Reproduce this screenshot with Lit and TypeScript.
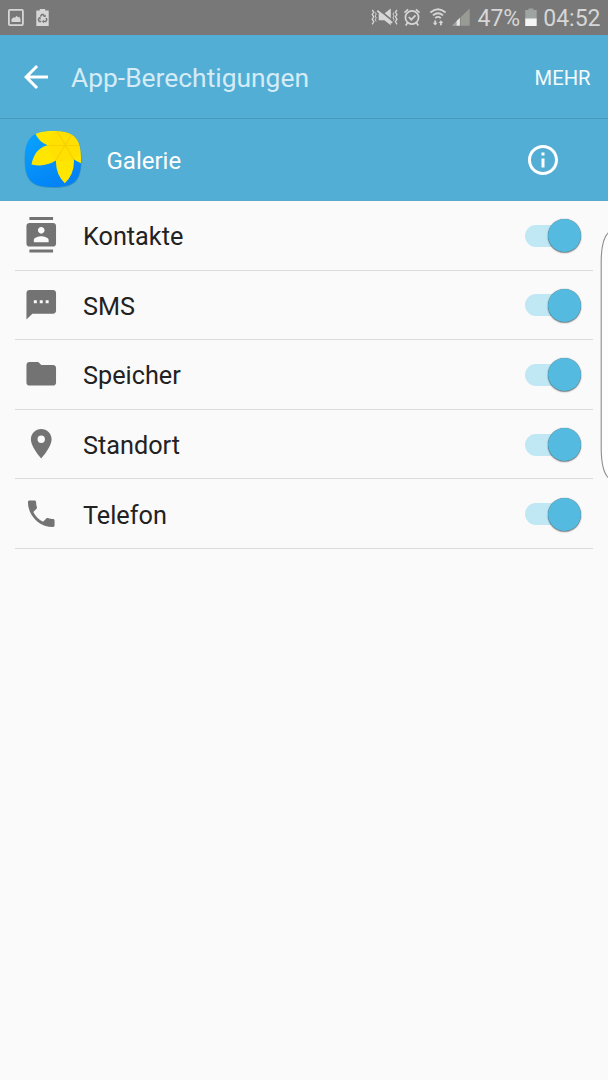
import { LitElement, html, css, svg } from "lit";
import { customElement } from "lit/decorators.js";

const ICONS = {
  contacts: svg`<path d="M20 0H4v2h16V0zM4 24h16v-2H4v2zM20 4H4c-1.1 0-2 .9-2 2v12c0 1.1.9 2 2 2h16c1.1 0 2-.9 2-2V6c0-1.1-.9-2-2-2zm-8 2.750c1.240 0 2.250 1.010 2.250 2.250s-1.010 2.250-2.250 2.250S9.750 10.240 9.750 9 10.760 6.750 12 6.750zM17 17H7v-1.500c0-1.670 3.330-2.500 5-2.500s5 .830 5 2.500V17z"/>`,
  sms: svg`<path d="M20 2H4c-1.100 0-1.990.9-1.990 2L2 22l4-4h14c1.100 0 2-.9 2-2V4c0-1.100-.9-2-2-2zM9 11H7V9h2v2zm4 0h-2V9h2v2zm4 0h-2V9h2v2z"/>`,
  folder: svg`<path d="M10 4H4c-1.100 0-1.990.9-1.990 2L2 18c0 1.100.9 2 2 2h16c1.100 0 2-.9 2-2V8c0-1.100-.9-2-2-2h-8l-2-2z"/>`,
  place: svg`<path d="M12 2C8.130 2 5 5.130 5 9c0 5.250 7 13 7 13s7-7.750 7-13c0-3.870-3.130-7-7-7zm0 9.500a2.500 2.500 0 0 1 0-5 2.500 2.500 0 0 1 0 5z"/>`,
  phone: svg`<path d="M6.620 10.790c1.440 2.830 3.760 5.140 6.590 6.590l2.200-2.200c.27-.27.67-.36 1.020-.24 1.120.37 2.330.57 3.570.57.55 0 1 .45 1 1V20c0 .55-.45 1-1 1-9.390 0-17-7.610-17-17 0-.55.45-1 1-1h3.500c.55 0 1 .45 1 1 0 1.250.2 2.450.57 3.570.11.35.03.74-.25 1.020l-2.200 2.200z"/>`,
};

const PERMISSIONS = [
  { icon: ICONS.contacts, label: "Kontakte" },
  { icon: ICONS.sms, label: "SMS" },
  { icon: ICONS.folder, label: "Speicher" },
  { icon: ICONS.place, label: "Standort" },
  { icon: ICONS.phone, label: "Telefon" },
];

@customElement("status-bar")
class StatusBar extends LitElement {
  static styles = css`
    :host {
      display: flex;
      align-items: center;
      height: 35px;
      box-sizing: border-box;
      padding: 0 7.500px 0 7px;
      background: #787878;
      color: #d6d6d6;
      font-size: 23px;
    }
    svg { display: block; flex: none; }
    .gap { flex: 1; }
    .battery-left { margin-left: 11px; }
    .percent { margin-left: 5.500px; }
    .text { line-height: 35px; padding-top: 1px; white-space: nowrap; }
  `;
  render() {
    return html`
      <svg width="18" height="35" viewBox="7 0 18 35">
        <rect x="8.900" y="9.900" width="14" height="15.200" rx="1" fill="none" stroke="#d6d6d6" stroke-width="1.800"/>
        <path d="M11.500 22v-2.800l2-2 1.500.5 1.500-2 1.500 1.500 1.300-.5 1.200 2.500V22z" fill="#d6d6d6"/>
      </svg>
      <svg class="battery-left" width="13" height="35" viewBox="36 0 13 35">
        <path d="M36.300 10.500h3.500V9h5.400v1.500h3.500V26H36.300z" fill="#d6d6d6"/>
        <g fill="none" stroke="#787878" stroke-width="1.500">
          <path d="M40.400 16.700l1.400-2.200h1.500l1.400 2.200M46 18l.8 1.600-1 1.800h-2.500M41.300 21.400h-2l-.9-1.800 1.200-2"/>
        </g>
        <path d="M43.300 17h2.400v-2.400zM43.800 19.500v3.700l-1.900-1.800zM38.200 17.300h2.500v2.400z" fill="#787878"/>
      </svg>
      <div class="gap"></div>
      <svg width="102" height="35" viewBox="370 0 102 35">
        <g fill="none" stroke="#d6d6d6" stroke-width="1.300">
          <path d="M372.200 10l1.600 2-1.600 2.400 1.600 2.400-1.600 2.400 1.600 2.400-1.600 2.700"/>
          <path d="M375.200 12.300l1 1.700-1 1.900 1 1.900-1 1.900 1 1.700" stroke-width="1"/>
          <path d="M397 10l-1.600 2 1.600 2.400-1.600 2.400 1.600 2.400-1.600 2.400 1.600 2.700"/>
          <path d="M394 12.300l-1 1.700 1 1.900-1 1.900 1 1.900-1 1.700" stroke-width="1"/>
        </g>
        <path d="M378.700 13.500h5.600l6.500-5v16.800l-6.500-5h-5.600z" fill="#d6d6d6"/>
        <path d="M378.500 9.300l15 12.300" stroke="#787878" stroke-width="1.800"/>
        <path d="M377.300 10.700l14.900 12.200" stroke="#d6d6d6" stroke-width="1.800"/>
        <g fill="none" stroke="#d6d6d6" stroke-width="1.700">
          <circle cx="412" cy="17.500" r="6.600"/>
          <path d="M408.800 17l2.500 2.700 4.200-4.400M404.500 12.600l3.600-3.300M415.900 9.300l3.600 3.300M407.700 22.500l-2 3M416.300 22.500l2 3"/>
        </g>
        <g fill="none" stroke="#d6d6d6" stroke-width="1.800">
          <path d="M430.400 12.500q7.600-6.600 15.200 0M432.900 15.400q5.100-4.400 10.200 0M435.200 18.100q2.800-2.400 5.600 0"/>
        </g>
        <path d="M434.300 20.500h1.800v2.300h1.400L435.200 25.500l-2.400-2.700h1.500zM440 25.300h1.800V23h1.500l-2.400-2.700-2.400 2.700h1.500z" fill="#d6d6d6"/>
        <path d="M460.500 17.200L469.700 8.500v17.200h-9.200z" fill="#979b94"/>
        <path d="M451.900 25.700l4.900-4.800v4.800z" fill="#a5a8a2"/>
        <path d="M456.600 21l3.300-3.300v8h-3.300z" fill="#e8e8e8"/>
      </svg>
      <div class="text percent">47%</div>
      <svg width="23" height="35" viewBox="519 0 23 35">
        <path d="M524.200 10h3.200V8.600h5V10h3.300v9h-11.500z" fill="#9da4a2"/>
        <path d="M524.200 18.500h11.500V26h-11.500z" fill="#f4f4f4"/>
      </svg>
      <div class="text">04:52</div>
    `;
  }
}

@customElement("toggle-switch")
class ToggleSwitch extends LitElement {
  static styles = css`
    :host { display: block; width: 56px; height: 34px; }
    .track {
      display: flex;
      align-items: center;
      justify-content: flex-end;
      width: 55px;
      height: 22px;
      margin-top: 6.500px;
      border-radius: 11px;
      background: linear-gradient(90deg, #c0e7f4 38px, transparent 38px);
    }
    .thumb {
      width: 33px;
      height: 33px;
      margin-right: -1px;
      flex: none;
      border-radius: 50%;
      background: #54bae0;
      box-shadow: 0 0 1px rgba(0, 0, 0, 0.6), 0 1px 1.5px rgba(0, 0, 0, 0.45);
    }
  `;
  render() {
    return html`<div class="track"><div class="thumb"></div></div>`;
  }
}

@customElement("app-root")
class AppRoot extends LitElement {
  static styles = css`
    :host {
      display: block;
      position: relative;
      height: 1080px;
      overflow: hidden;
      background: #fafafa;
      font-family: Roboto, "Noto Sans", sans-serif;
    }
    svg { display: block; flex: none; }
    .bar {
      display: flex;
      align-items: center;
      box-sizing: border-box;
      height: 84px;
      padding: 0 17.500px 0 17.500px;
      background: #53aed5;
      border-bottom: 1px solid #4899bb;
    }
    .title { flex: 1; margin-left: 17.500px; padding-top: 2.500px; font-size: 26.400px; color: #d5ebf5; }
    .more { padding-top: 2px; font-size: 20.200px; color: #f3fafc; }
    .app {
      display: flex;
      align-items: center;
      box-sizing: border-box;
      height: 82px;
      padding: 0 47px 0 23px;
      background: #53aed5;
      border-bottom: 1px solid #55a9cc;
    }
    .name { flex: 1; margin-left: 23.500px; padding-top: 2px; font-size: 24px; color: #fff; }
    .row {
      display: flex;
      align-items: center;
      box-sizing: border-box;
      height: 69.600px;
      margin: 0 15px;
      padding: 0 12px 0 8px;
      border-bottom: 1px solid #dcdcdc;
    }
    .icon { fill: #737373; }
    .label { flex: 1; margin-left: 24px; padding-top: 2.700px; font-size: 25.250px; color: #222; }
    .edge { position: absolute; right: 0; top: 228px; }
  `;
  render() {
    return html`
      <status-bar></status-bar>
      <header class="bar">
        <svg width="36" height="36" viewBox="0 0 24 24" fill="#fff">
          <path d="M20 11H7.830l5.590-5.590L12 4l-8 8 8 8 1.410-1.410L7.830 13H20v-2z"/>
        </svg>
        <div class="title">App-Berechtigungen</div>
        <div class="more">MEHR</div>
      </header>
      <section class="app">
        <svg width="60" height="62" viewBox="-2 -2 60 62">
          <defs>
            <linearGradient id="blue" x1="0" y1="0" x2="0.600" y2="1">
              <stop offset="0" stop-color="#08a5ff"/>
              <stop offset="1" stop-color="#0381f5"/>
            </linearGradient>
            <clipPath id="tile">
              <path d="M28 0C48 0 56 6 56 28S49 56 28 56 0 50 0 28 8 0 28 0z"/>
            </clipPath>
          </defs>
          <path d="M28 0.800C48 .8 56.500 6 56.500 28.800S49 57 28 57-.5 50-.5 28.800 8 .8 28 .8z" fill="#2b83aa" opacity=".6"/>
          <g clip-path="url(#tile)">
            <rect width="56" height="56" fill="url(#blue)"/>
            <path d="M10 2L12-2H58V32.800Q53 31.500 48.800 28.300Q50 42 39.800 52.300Q30.500 43 31 29.600Q20 36.500 6.500 33.500Q9.500 17.500 22.500 14.300Q14 11 10 2z" fill="#ffe600"/>
            <circle cx="40" cy="14" r="16.500" fill="#ffda00" opacity=".45"/>
            <path d="M22 14.500H56M32 0L49 29M49 0L31 29" stroke="#f3c500" stroke-width="1.200" opacity=".6"/>
          </g>
        </svg>
        <div class="name">Galerie</div>
        <svg width="36" height="36" viewBox="0 0 24 24" fill="#fff">
          <path d="M11 17h2v-6h-2v6zm1-15C6.480 2 2 6.480 2 12s4.480 10 10 10 10-4.480 10-10S17.520 2 12 2zm0 18c-4.410 0-8-3.590-8-8s3.590-8 8-8 8 3.590 8 8-3.590 8-8 8zM11 9h2V7h-2v2z"/>
        </svg>
      </section>
      <main>
        ${PERMISSIONS.map(
          (p) => html`<div class="row">
            <svg class="icon" width="36" height="36" viewBox="-0.330 0 24.330 24.330">${p.icon}</svg>
            <div class="label">${p.label}</div>
            <toggle-switch></toggle-switch>
          </div>`
        )}
      </main>
      <svg class="edge" width="10" height="254" viewBox="598 228 10 254">
        <path d="M609 232C604 236 601.200 246 601.200 262V448C601.200 464 604 474 609 478.500" fill="#fdfdfd" stroke="#8c8c8c" stroke-width="1.100"/>
      </svg>
    `;
  }
}
